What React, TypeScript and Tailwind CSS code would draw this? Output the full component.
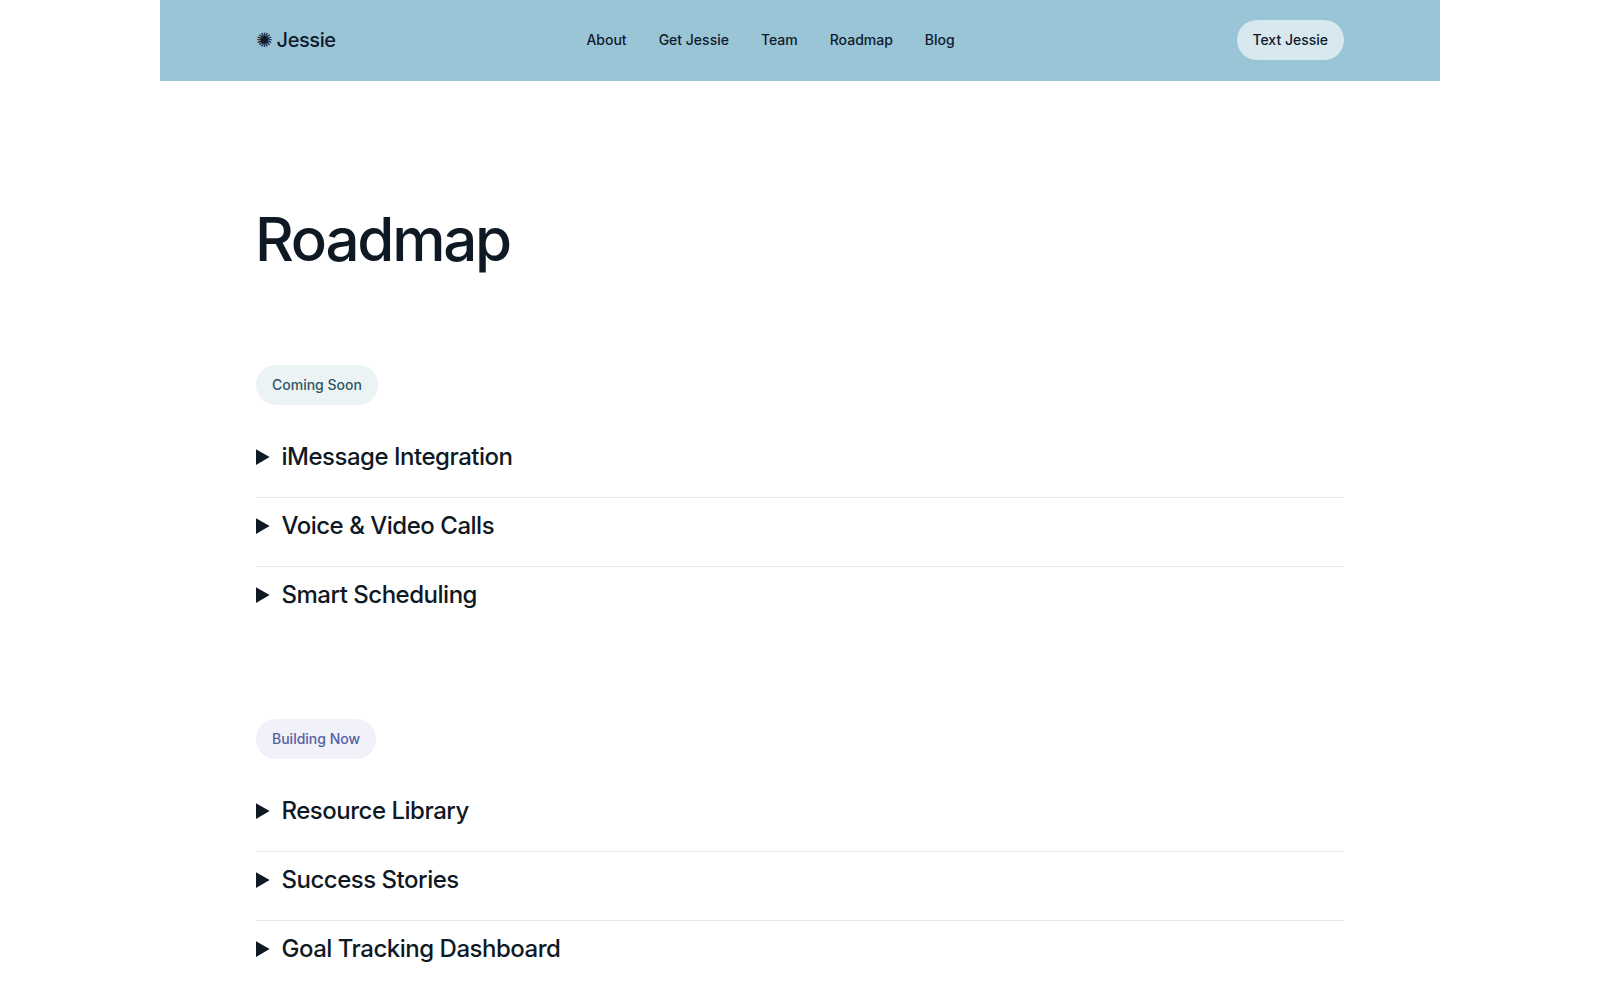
const sections = [
  {
    label: "Coming Soon",
    pill: "bg-[#ebf3f5] text-[#2f5565]",
    items: ["iMessage Integration", "Voice & Video Calls", "Smart Scheduling"],
  },
  {
    label: "Building Now",
    pill: "bg-[#f0f1f9] text-[#5560a0]",
    items: ["Resource Library", "Success Stories", "Goal Tracking Dashboard"],
  },
];

function Header() {
  return (
    <header className="bg-[#9ac5d7] h-[81px] pb-px px-24 flex items-center justify-between">
      <a className="text-xl font-medium tracking-[-0.02em] [word-spacing:-1px] text-[#0f1a2b] flex items-center">✺ Jessie</a>
      <nav className="flex gap-8 mr-[32px] text-sm font-medium text-[#0f1a2b]">
        <a>About</a>
        <a>Get Jessie</a>
        <a>Team</a>
        <a>Roadmap</a>
        <a>Blog</a>
      </nav>
      <a className="h-10 pl-[15px] pr-4 rounded-full bg-[#d7e8ef] text-sm font-medium text-[#0f1a2b] flex items-center">
        Text Jessie
      </a>
    </header>
  );
}

function Section({ label, pill, items }: { label: string; pill: string; items: string[] }) {
  return (
    <section className="mb-[84px]">
      <span className={`inline-flex h-10 items-center px-4 rounded-full text-sm font-medium ${pill}`}>{label}</span>
      <div className="mt-6">
        {items.map((item) => (
          <details key={item} className="border-b border-[#e5e7eb] last:border-b-0 pt-[10px] pb-[22px]">
            <summary className="text-2xl leading-9 font-medium tracking-[-0.02em] text-[#0f1924]">{item}</summary>
          </details>
        ))}
      </div>
    </section>
  );
}

export default function App() {
  return (
    <div className="w-[1280px] mx-auto bg-white font-['Inter',sans-serif]">
      <Header />
      <main className="px-24 pt-[128px]">
        <h1 className="text-6xl font-medium tracking-[-0.037em] -ml-[1px] text-[#0f1924] mb-24">Roadmap</h1>
        {sections.map((s) => (
          <Section key={s.label} {...s} />
        ))}
      </main>
    </div>
  );
}
